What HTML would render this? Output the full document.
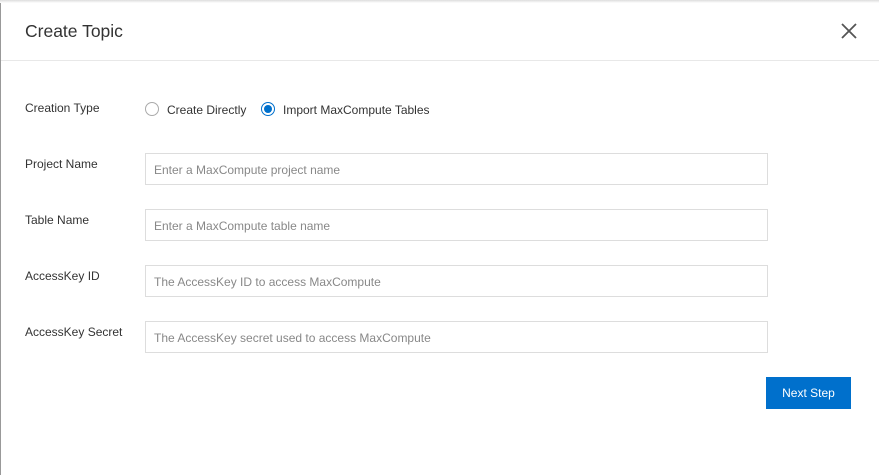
<!DOCTYPE html>
<html><head><style>
body{margin:0;width:879px;height:475px;background:#fff;font-family:"Liberation Sans",sans-serif;position:relative;overflow:hidden}
.lb{position:absolute;left:0;top:0;width:1px;height:475px;background:#999}
.sh{position:absolute;left:0;top:0;width:879px;height:3px;background:linear-gradient(#ddd,#fff)}
.t{position:absolute;left:25px;top:21px;font-size:17.5px;color:#333}
.x{position:absolute;left:840px;top:22px}
.hr{position:absolute;left:1px;top:60px;width:878px;height:1px;background:#e8e8e8}
.l{position:absolute;left:25px;font-size:12px;color:#333}
.in{position:absolute;left:145px;height:30px;border:1px solid #ddd;font-size:12px;color:#888;line-height:32px;padding-left:8px;width:613px}
.r{position:absolute;top:102px;width:12px;height:12px;border:1px solid #aaa;border-radius:50%}
.rt{position:absolute;top:103px;font-size:12px;color:#333}
.btn{position:absolute;left:766px;top:377px;width:85px;height:32px;background:#0070cc;color:#fff;font-size:12px;text-align:center;line-height:33px}
</style></head><body>
<div class="lb"></div><div class="sh"></div>
<div class="t">Create Topic</div>
<svg class="x" width="18" height="18" viewBox="0 0 18 18"><path d="M2 2L16 16M16 2L2 16" stroke="#555" stroke-width="1.8"/></svg>
<div class="hr"></div>
<div class="l" style="top:101px">Creation Type</div>
<div class="r" style="left:145px"></div><div class="rt" style="left:167px">Create Directly</div>
<div class="r" style="left:261px;border-color:#0070cc"><div style="position:absolute;left:2px;top:2px;width:8px;height:8px;border-radius:50%;background:#0070cc"></div></div><div class="rt" style="left:283px">Import MaxCompute Tables</div>
<div class="l" style="top:157px">Project Name</div><div class="in" style="top:153px">Enter a MaxCompute project name</div>
<div class="l" style="top:213px">Table Name</div><div class="in" style="top:209px">Enter a MaxCompute table name</div>
<div class="l" style="top:269px">AccessKey ID</div><div class="in" style="top:265px">The AccessKey ID to access MaxCompute</div>
<div class="l" style="top:325px">AccessKey Secret</div><div class="in" style="top:321px">The AccessKey secret used to access MaxCompute</div>
<div class="btn">Next Step</div>
</body></html>
